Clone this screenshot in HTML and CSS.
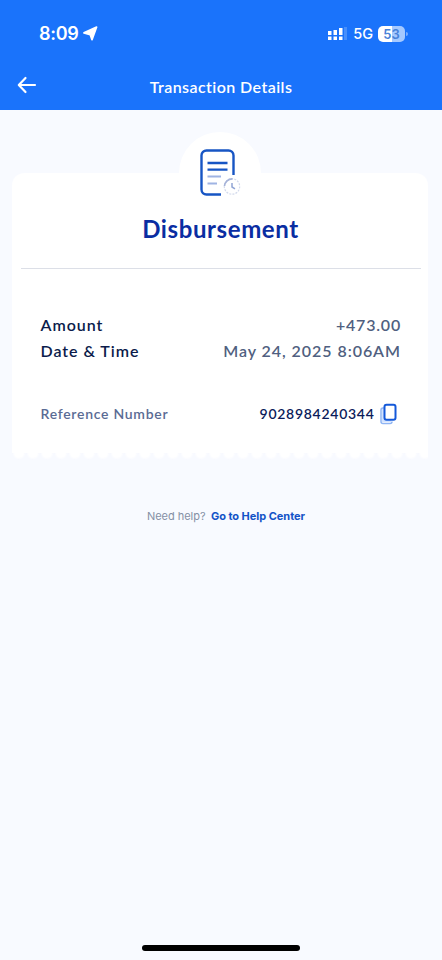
FILE: index.html
```html
<!DOCTYPE html>
<html lang="en">
<head>
<meta charset="utf-8">
<meta name="viewport" content="width=device-width, initial-scale=1">
<title>Transaction Details</title>
<link rel="stylesheet" href="styles.css">
</head>
<body>
<div class="screen">
  <header class="top">
    <div class="status">
      <span class="clock">8:09</span>
      <svg class="location" width="15" height="15" viewBox="0 0 14 14"><path d="M12.700 1 8.400 12.800 6.700 8 .9 6.400Z" fill="#fff" stroke="#fff" stroke-width="1.600" stroke-linejoin="round"/></svg>
      <svg class="signal" width="21" height="14" viewBox="0 0 21 14">
        <g fill="#fff"><path d="M1 4h3.500v4H1zM6.500 3H10v5H6.500zM12 1h3.500v7H12zM1 9.500h3.500V13H1zM6.500 9.500H10V13H6.500zM12 9.500h3.500V13H12z"/><path d="M17 0h3v13h-3z" opacity=".2"/></g>
      </svg>
      <span class="network">5G</span>
      <span class="battery">53</span>
      <span class="battery-tip"></span>
    </div>
    <nav class="bar">
      <svg class="back" width="20" height="18" viewBox="0 0 20 18"><path d="M18 9H2M8.500 2 1.800 9l6.700 7" fill="none" stroke="#fff" stroke-width="2.200" stroke-linecap="round" stroke-linejoin="round"/></svg>
      <h1 class="title">Transaction Details</h1>
    </nav>
  </header>
  <main>
    <section class="card">
      <div class="badge">
        <svg width="44" height="50" viewBox="0 0 44 50" fill="none">
          <path d="M35.500 27V7.500a5 5 0 0 0-5-5h-22a5 5 0 0 0-5 5v34a5 5 0 0 0 5 5H23" stroke="#1755c4" stroke-width="2.400"/>
          <path d="M9.500 15h20M9.500 21.700h20" stroke="#1755c4" stroke-width="2.300"/>
          <path d="M9.500 28.600H23M9.500 35.400h9.500" stroke="#9fb4e3" stroke-width="2"/>
          <circle cx="34" cy="38.500" r="7.700" stroke="#d3daec" stroke-width="1.200" stroke-dasharray="2 1.200"/>
          <path d="M26.500 38a7.700 7.700 0 0 1 8-7.200" stroke="#a6b3d8" stroke-width="1.700"/>
          <path d="M34 35v4l3 1.800" stroke="#91a5d5" stroke-width="1.500"/>
        </svg>
      </div>
      <h2 class="kind">Disbursement</h2>
      <hr>
      <dl class="rows">
        <div class="row"><dt class="amount-label">Amount</dt><dd class="amount">+473.00</dd></div>
        <div class="row"><dt class="date-label">Date &amp; Time</dt><dd class="date">May 24, 2025 8:06AM</dd></div>
        <div class="row reference">
          <dt class="ref-label">Reference Number</dt>
          <dd class="ref"><span class="ref-number">9028984240344</span>
            <svg width="18" height="22" viewBox="0 0 18 22" fill="none"><path d="M4 5H3a2 2 0 0 0-2 2v11.500a2 2 0 0 0 2 2h7a2 2 0 0 0 2-2" stroke="#8fb5f4" stroke-width="1.500"/><path d="M3 6v12h8" stroke="#d3e3ff" stroke-width="2"/><rect x="4.500" y="1.800" width="11" height="15" rx="2" fill="#fff" stroke="#1459d9" stroke-width="2"/></svg>
          </dd>
        </div>
      </dl>
    </section>
    <p class="help"><span class="question">Need help?</span><a class="link">Go to Help Center</a></p>
  </main>
  <div class="home"></div>
</div>
</body>
</html>
```
FILE: styles.css
```css
* { box-sizing: border-box; }
body { margin: 0; background: #f8faff; font-family: Lato, sans-serif; font-variant-ligatures: none; }
h1, h2, p, dl, dd { margin: 0; }
svg { display: block; flex: none; }
.screen { height: 960px; display: flex; flex-direction: column; }
.top { height: 110px; background: #1a73fb; color: #fff; }
.status { height: 67px; padding: 0 34px 0 39px; display: flex; align-items: center; }
.clock { font: 600 18px/24px Inter, sans-serif; letter-spacing: -.3px; }
.location { margin-left: 5px; }
.signal { margin-left: auto; margin-right: 5px; }
.network { font: 500 14.500px/20px Inter, sans-serif; margin-right: 5px; }
.battery { width: 27px; height: 16px; border-radius: 5px; background: linear-gradient(90deg, #fff 53%, #a5c9ff 53%); color: #4781d8; font: 600 13px/16px Inter, sans-serif; text-align: center; }
.battery-tip { width: 2px; height: 4px; margin-left: 1px; border-radius: 0 2px 2px 0; background: #79adff; }
.bar { height: 39px; padding: 0 17px; display: grid; grid-template-columns: 20px 1fr 20px; align-items: center; }
.back { margin-top: -3px; }
.title { text-align: center; white-space: nowrap; font-size: 16px; line-height: 20px; font-weight: 600; letter-spacing: .43px; }
main { flex: 1; }
.card { margin: 63px 14px 0 12px; height: 288px; border-radius: 12px 12px 0 0; background: radial-gradient(circle at 7px 0, #fff 4px, #fff0 7px) 0 100% / 14px 8px repeat-x, linear-gradient(#fff, #fff) 0 0 / 100% calc(100% - 8px) no-repeat; }
.badge { width: 82px; height: 82px; margin: 0 auto; transform: translateY(-41px); border-radius: 50%; background: #fff; display: flex; align-items: center; justify-content: center; }
.kind { margin-top: -42px; padding-left: 1px; text-align: center; color: #0a2da2; font-size: 24px; line-height: 32px; font-weight: 700; letter-spacing: .6px; }
hr { height: 1px; margin: 23px 7px 0 9px; border: 0; background: #dcdfe7; }
.rows { padding: 43px 27px 0 28.500px; font-size: 16px; line-height: 26px; font-weight: 600; letter-spacing: .95px; }
.row { display: flex; justify-content: space-between; white-space: nowrap; color: #0b1c4b; }
.amount, .date { color: #505f80; }
.amount { letter-spacing: .8px; }
.reference { margin-top: 37px; font-size: 14px; letter-spacing: .72px; }
.ref-label { color: #5a6b94; }
.ref { display: flex; align-items: center; gap: 5px; margin-right: 3.500px; }
.ref-number { color: #0b1c5b; }
.help { display: flex; margin: 45px 0 0 147px; gap: 5.500px; font: 400 11px/20px Inter, sans-serif; letter-spacing: -.04px; white-space: nowrap; }
.question { color: #8590a5; }
.link { color: #1353c7; font-weight: 700; }
.home { width: 158px; height: 6px; margin: 0 auto 9px; border-radius: 3px; background: #000; }
```
